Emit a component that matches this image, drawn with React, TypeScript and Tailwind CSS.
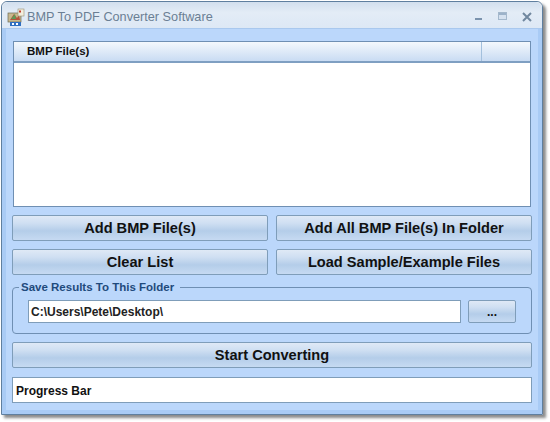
const btn =
  "flex items-center justify-center rounded-[2px] border border-[#7f9db9] bg-[linear-gradient(#dfe9f6_0%,#cfdff2_30%,#b4cde9_62%,#c6daf2_100%)] font-['Liberation_Sans',sans-serif] font-bold text-[#111]";
const bigBtn = `${btn} h-[26px] pt-[1px] text-[14.600px]`;

function AppIcon() {
  return (
    <svg width="18" height="18" viewBox="0 0 18 18" className="shrink-0">
      <rect x="1" y="5" width="13" height="9" fill="#c9b98f" stroke="#6b6a55" strokeWidth="0.7" />
      <path d="M3 12 L7 6 L10 10 L12 7 L13 12 Z" fill="#b5533c" />
      <path d="M4 11 L8 6 L9 11 Z" fill="#5f9a58" />
      <rect x="11" y="1" width="6" height="7" fill="#f3eedd" stroke="#9a8f73" strokeWidth="0.6" />
      <rect x="12" y="2.500" width="2" height="2" fill="#c43b2e" />
      <rect x="3" y="14" width="11" height="4" fill="#2f6fc2" />
      <rect x="5" y="15" width="2" height="2" fill="#fff" />
      <rect x="9" y="15" width="2" height="2" fill="#fff" />
    </svg>
  );
}

export default function App() {
  return (
    <div className="h-[422px] w-[550px] bg-white pl-[1px] pt-[1px] font-['Liberation_Sans',sans-serif]">
      <div className="flex h-[414px] w-[542px] flex-col rounded-t-[6px] border border-[#5f7f9f] shadow-[3px_3px_3px_#8a8a8a]">
        <div className="flex h-[27px] shrink-0 items-center rounded-t-[6px] border-b border-[#a9c8ee] bg-[linear-gradient(#d2dfee,#e3ecf6_40%,#dde8f5)] pl-[5px] pr-[10px] pt-[3px]">
          <AppIcon />
          <span className="ml-[2px] mt-[3px] text-[12.7px] text-[#6b7f94]">BMP To PDF Converter Software</span>
          <div className="ml-auto flex items-center">
            <svg width="10" height="10" viewBox="0 0 10 10" className="mr-[14px]">
              <rect x="1" y="6" width="7" height="2" fill="#7b93ad" />
            </svg>
            <svg width="10" height="9" viewBox="0 0 10 9" className="mr-[14px]">
              <rect x="0.500" y="0.500" width="8" height="7" fill="#d5e1ef" stroke="#a4b8cc" />
              <rect x="1" y="1" width="7" height="2" fill="#9cb2c9" />
            </svg>
            <svg width="10" height="10" viewBox="0 0 10 10">
              <path d="M1 1 L9 9 M9 1 L1 9" stroke="#71889f" strokeWidth="2" />
            </svg>
          </div>
        </div>

        <div className="flex flex-1 flex-col border-x-[4px] border-b-[4px] border-[#a9cbf5] bg-[#bbd7fb] px-[6px] pt-[12px]">
          <div className="mx-[1px] flex h-[166px] shrink-0 flex-col border border-[#6f8fb3] bg-white">
            <div className="flex h-[21px] shrink-0 border-b-2 border-[#7f9fc2] bg-[linear-gradient(#f4f8fd,#c9dcf3)]">
              <div className="flex w-[468px] items-center border-r border-[#a3c0dd] pl-[13px] pt-[1px] text-[11.5px] font-bold text-[#111]">
                BMP File(s)
              </div>
            </div>
          </div>

          <div className="mt-[8px] grid grid-cols-2 gap-[8px]">
            <button className={bigBtn}>Add BMP File(s)</button>
            <button className={bigBtn}>Add All BMP File(s) In Folder</button>
            <button className={bigBtn}>Clear List</button>
            <button className={bigBtn}>Load Sample/Example Files</button>
          </div>

          <div className="relative mt-[12px] flex h-[47px] shrink-0 items-start rounded-[4px] border border-[#6f8fb3] px-[15px] pt-[12px]">
            <span className="absolute left-[6px] top-[-8px] bg-[#bbd7fb] pl-[2px] pr-[6px] text-[11.5px] leading-[14px] font-bold text-[#1f4a7c]">
              Save Results To This Folder
            </span>
            <div className="flex h-[23px] w-[433px] items-center border border-[#7f9db9] bg-white pl-[2px] text-[12px] font-bold text-[#222]">
              C:\Users\Pete\Desktop\
            </div>
            <button className={`${btn} ml-[7px] h-[23px] w-[48px] text-[12px]`}>...</button>
          </div>

          <button className={`${bigBtn} mt-[8px] shrink-0`}>Start Converting</button>

          <div className="mt-[9px] flex h-[26px] shrink-0 items-center border border-[#7f9db9] bg-white pl-[3px] pt-[1px] text-[12px] font-bold text-[#111]">
            Progress Bar
          </div>
        </div>
      </div>
    </div>
  );
}
